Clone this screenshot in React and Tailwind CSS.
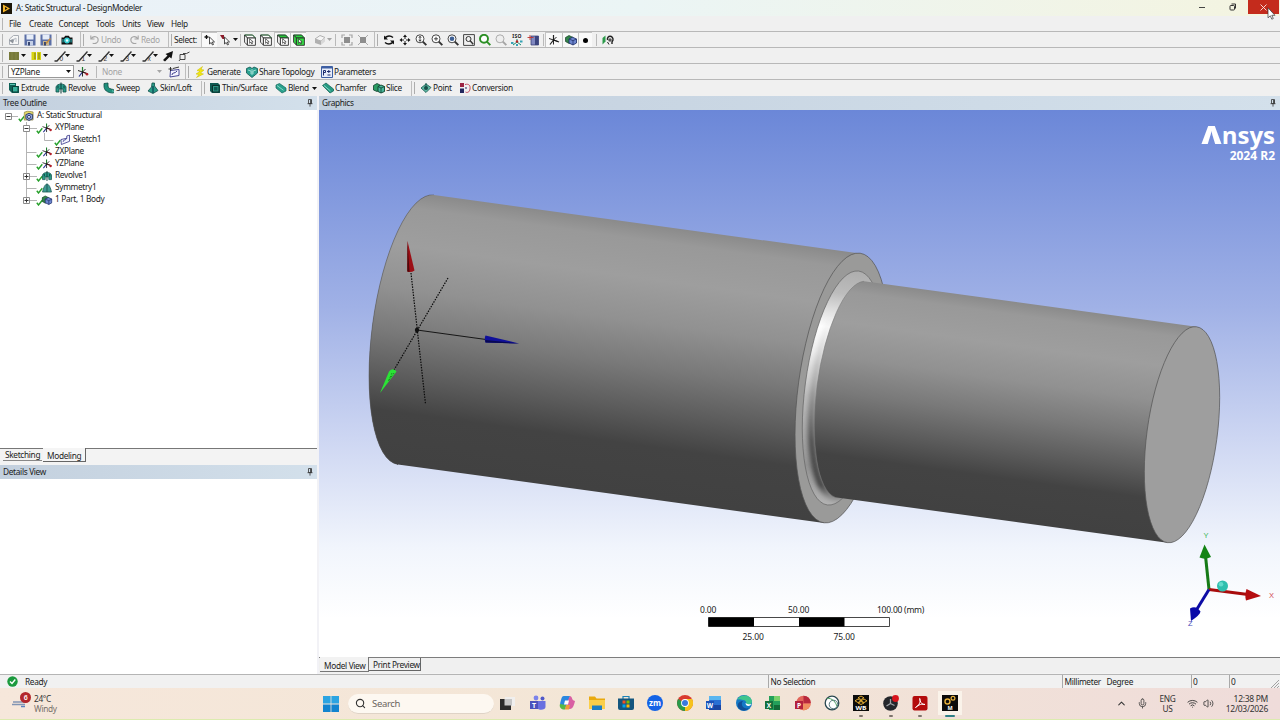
import React from 'react';
import { ChevronUp, Mic, Search, Volume2, Wifi } from 'lucide-react';

// ---------- small building blocks ----------

const Svg = ({ children, size = 'w-3 h-3' }) => (
  <svg className={`${size} shrink-0`} viewBox="0 0 12 12" fill="none">{children}</svg>
);

const Cell = ({ w = 'w-4', on, children }) => (
  <span className={`${w} h-[15px] flex items-center justify-center shrink-0 ${on ? 'bg-[#f9f9f9] border-l border-t border-[#c4c4c4]' : ''}`}>
    {children}
  </span>
);

const Label = ({ w, dim, children }) => (
  <span className={`${w} shrink-0 whitespace-nowrap ${dim ? 'text-[#a3a3a3]' : ''}`}>{children}</span>
);

const Sep = ({ w = 'w-1' }) => (
  <span className={`${w} h-3 shrink-0 flex justify-center`}><i className="w-px h-full bg-[#b9b9b9]" /></span>
);

// end of one toolbar and grip of the next one
const Grip = ({ w = 'w-[10px]' }) => (
  <span className={`${w} h-[15px] shrink-0 flex justify-center items-center gap-[2px]`}>
    <i className="w-px h-full bg-[#bdbdbd]" />
    <i className="w-px h-3 bg-[#adadad]" />
  </span>
);

const Caret = ({ w = 'w-[6px]', color = '#111' }) => (
  <span className={`${w} shrink-0 flex justify-center`}>
    <svg className="w-[5px] h-[3px] shrink-0" viewBox="0 0 5 3"><path d="M0 0h5L2.500 3z" fill={color} /></svg>
  </span>
);

const ToolRow = ({ children, last }) => (
  <div className={`h-4 flex items-center pl-[2px] bg-[#f0f0f0] ${last ? '' : 'border-b border-[#b8b8b8]'}`}>
    <i className="w-px h-3 bg-[#b5b5b5] mr-[3px] shrink-0" />
    {children}
  </div>
);

const Pin = () => (
  <svg className="w-[6px] h-[8px]" viewBox="0 0 6 8">
    <path d="M1.500 .5h3v4h-3zM.5 4.700h5M3 5v2.600" stroke="#333" strokeWidth=".8" fill="none" />
    <path d="M3.200 1h1.200v3.500H3.200z" fill="#333" />
  </svg>
);

const PanelHeader = ({ title }) => (
  <div className="h-[14px] shrink-0 flex items-center justify-between pl-[3px] pr-1 bg-linear-to-r from-[#c3d0de] to-[#d3e0eb]">
    <span>{title}</span>
    <Pin />
  </div>
);

// ---------- toolbar icons ----------

const NewIcon = () => (
  <Svg>
    <path d="M1.500 10.500V5l4-3.500h5v9z" fill="#f7f7f7" stroke="#a8adb4" />
    <path d="M1 6.500l4 3 1.500-5z" fill="#8d939b" /><path d="M5 6l3-2v4" stroke="#b9bec6" />
  </Svg>
);

const SaveIcon = ({ as }) => (
  <Svg>
    <path d="M.5 .5h11v11H.5z" fill="#5b6fa6" />
    <path d="M2.500 .5h7v5h-7z" fill="#e6edf8" /><path d="M3 7h6v4.500H3z" fill={as ? '#c9b78e' : '#c4cfe6'} />
    <path d="M4 8h2v3.500H4z" fill="#39476f" />
    {as && <path d="M6 9.500l4.500-5" stroke="#c58b3d" strokeWidth="1.300" />}
  </Svg>
);

const CameraIcon = () => (
  <Svg>
    <path d="M.5 3.500H3L4.200 1.800h3.600L9 3.500h2.500v7H.5z" fill="#111" />
    <circle cx="6" cy="6.500" r="2.900" fill="#39cfd4" /><circle cx="6" cy="6.500" r="1.200" fill="#e9ffff" />
    <path d="M1.300 5h1.300v3.500H1.300zM9.400 5h1.300v3.500H9.400z" fill="#23999d" />
  </Svg>
);

const UndoIcon = ({ flip }) => (
  <svg className={`w-[11px] h-[11px] ${flip ? '-scale-x-100' : ''}`} viewBox="0 0 12 12" fill="none">
    <path d="M2 1.500v4h4M2.300 5.200C5 1.500 10 2.500 10 6.500c0 3-3 4.500-6 3.500" stroke="#a4a4a4" strokeWidth="1.200" />
  </svg>
);

const CursorIcon = ({ mark }) => (
  <Svg>
    <path d="M5.500 3v7l1.700-1.500L8.500 11l1-.5-1.200-2.400 2.200-.2z" fill="#fff" stroke="#222" strokeWidth=".8" />
    {mark ? <path d="M1 1h4v4H3.500z" fill="#8c1c2b" /> : <path d="M.5 3h4M2.500 1v4" stroke="#111" strokeWidth="1.300" />}
  </Svg>
);

const CubeIcon = ({ top = '#fff', side = '#fff', line = '#2c2c2c' }) => (
  <Svg>
    <path d="M.6 1h8l2.800 3H3.400z" fill={top} stroke={line} strokeWidth=".9" />
    <path d="M.6 1v7.200L3.400 11V4z" fill={side} stroke={line} strokeWidth=".9" />
    <path d="M3.400 4h8v7.300h-8z" fill={side} stroke={line} strokeWidth=".9" />
    <path d="M5.600 4.800v4.500l1.200-1 1 1.700.7-.4-.8-1.700 1.500-.1z" fill="#fff" stroke="#111" strokeWidth=".6" />
    <path d="M.6 1h8l2.800 3" stroke="#26803a" strokeWidth=".7" />
  </Svg>
);

const GhostCube = () => (
  <Svg>
    <path d="M1 5l5-3.500 5 2-4 3.500z" fill="#f5f5f5" stroke="#b0b0b0" /><path d="M1 5l6 2v4L1 9z" fill="#b0b0b0" />
    <path d="M7 7l4-3.500v4L7 11z" fill="#d8d8d8" />
  </Svg>
);

const ExtendIcon = ({ cross }) => (
  <Svg>
    <path d="M3 3h6v6H3z" fill="#8d8d8d" />
    {cross
      ? <path d="M1 1l2 2M11 1L9 3M1 11l2-2M11 11L9 9" stroke="#aaa" />
      : <path d="M1 4V1h3M8 1h3v3M11 8v3H8M4 11H1V8" stroke="#a5a5a5" strokeWidth="1.200" />}
  </Svg>
);

const RotateIcon = () => (
  <Svg>
    <path d="M2 5c0-3 5-4 8-1.500M10 7c0 3-5 4-8 1.500" stroke="#111" strokeWidth="1.500" />
    <path d="M1 1.500v4h4zM11 10.500v-4H7z" fill="#111" />
  </Svg>
);

const PanIcon = () => (
  <Svg>
    <path d="M6 2v8M2 6h8" stroke="#222" strokeDasharray="3 2" />
    <path d="M6 .5L8 3H4zM6 11.500L4 9h4zM.5 6L3 4v4zM11.500 6L9 8V4z" fill="#111" />
  </Svg>
);

const LensIcon = ({ ring = '#333', fill = '#fff', inner, heavy }) => (
  <Svg>
    <circle cx="5" cy="4.800" r="4" fill={fill} stroke={ring} strokeWidth={heavy ? 1.9 : 0.9} />
    <path d="M7.800 7.600l3.500 3.600" stroke={ring} strokeWidth="1.900" />
    {inner}
  </Svg>
);

const IsoIcon = () => (
  <span className="flex flex-col items-center leading-none">
    <span className="text-[5px] font-bold leading-[5px] tracking-[.3px]">ISO</span>
    <svg className="w-3 h-[7px]" viewBox="0 0 12 7">
      <path d="M6 0v3l-4 3M6 3l4 3" stroke="#1a8b6b" fill="none" />
      <path d="M0 3h2.500v2H0zM9 1.500h2.500v2H9zM5 5h2v2H5z" fill="#37a3b5" /><circle cx="6" cy="2.500" r="1.200" fill="#b22" />
    </svg>
  </span>
);

const LookAtIcon = () => (
  <Svg>
    <path d="M4 2h7.500v9H4z" fill="#8088c0" stroke="#30386f" strokeWidth=".7" />
    <path d="M8 2h3.500v9H8z" fill="#3b447f" /><path d="M.5 3.500h6M3 1v5" stroke="#c0322c" strokeWidth=".9" />
  </Svg>
);

const AxesIcon = ({ mono }) => (
  <Svg>
    <path d="M5.500 6V1" stroke={mono ? '#222' : '#1d7c2c'} strokeWidth="1.200" />
    <path d="M5.500 6L11 8" stroke={mono ? '#222' : '#b3202a'} strokeWidth="1.300" />
    <path d="M5.500 6L2 10.500" stroke={mono ? '#222' : '#27318d'} strokeWidth="1.200" />
    <path d="M1 4.500l9 3M5.500 6v4.500M8.500 3L5.500 6" stroke="#111" strokeWidth=".9" />
    {!mono && <circle cx="10" cy="8.300" r="1.300" fill="#b3202a" />}
  </Svg>
);

const PartIcon = () => (
  <Svg>
    <path d="M.5 3.500L4 1.500l4 2v4l-4 2-3.500-2z" fill="#31834a" stroke="#143d22" strokeWidth=".7" />
    <path d="M4 5l3.500-1.800L11.500 5v4L8 11 4 9z" fill="#6d86cf" stroke="#1b2a63" strokeWidth=".8" />
    <path d="M4 5l4 1.700L11.500 5M8 6.700V11" stroke="#1b2a63" strokeWidth=".7" />
  </Svg>
);

const FaceIcon = () => (
  <Svg>
    <path d="M.5 4l3-2.500v6l-3 3z" fill="#2c9a4b" />
    <path d="M5.500 6c-1-5 6-5 5.500 0l-1 2v2" stroke="#222" strokeWidth="1.400" /><circle cx="8" cy="6" r="1.800" fill="#555" />
    <path d="M5.500 8l1.500 2.500" stroke="#222" />
  </Svg>
);

const ColorSwatch = ({ yellow }) => (
  <Svg>
    <path d={yellow ? 'M1.500 2H6v8H1.500zM7 2h4v8H7z' : 'M1 2h10v8H1z'} fill={yellow ? '#d7d413' : '#77793a'} />
    <path d={yellow ? 'M4.500 3h1v6h-1zM8.500 3h1v6h-1z' : 'M4 2v8M8 2v8'} stroke={yellow ? '#8a8712' : '#8f9150'} strokeWidth=".6" />
  </Svg>
);

const PenIcon = ({ n }) => (
  <Svg>
    <path d="M.5 11h2.500L11.500 1.500" stroke="#333" strokeWidth="1.400" />
    <text x="5.500" y="10.500" fontSize="6.500" fill="#333" fontFamily="Liberation Sans, sans-serif">{n}</text>
  </Svg>
);

// teal solids shared by the modelling commands
const solids = {
  extrude: <><path d="M1 1h7v3h3v7H4L1 8z" fill="#0f6157" /><path d="M4.500 4.500H10V10H4.500z" fill="#39b09a" stroke="#0a3f39" /><path d="M2 2h5v1H2z" fill="#5cc4b1" /></>,
  revolve: <><path d="M1 10V5c1-4 9-4 10 0v5H8V7H4v3z" fill="#2a9c89" stroke="#0f514a" strokeWidth=".8" /><path d="M6 .5v11M3 3.500v3M9 3.500v3" stroke="#0b3f3a" /></>,
  sweep: <><path d="M1 1.500l4-.5v3c0 2 2 3 5.500 3.500V11C4 11 1 8 1 4z" fill="#1f8f7c" stroke="#0d4b43" strokeWidth=".8" /><path d="M9 7.500l2 1.500-1 2" fill="#62c9b5" /></>,
  loft: <><path d="M5 1h2.500v3L11 8.500 6 11.500 1 9l3.500-4z" fill="#2a9c89" stroke="#0f514a" strokeWidth=".8" /><path d="M6 4v7" stroke="#0b4a55" strokeWidth="1.300" /></>,
  thin: <><path d="M1 1h8l2 2v8H3L1 9z" fill="#0e5750" /><path d="M3.500 3.500h6.500V10H3.500z" fill="#2c9382" stroke="#082f2b" /><path d="M5 5h3.500v3.500H5z" fill="#0e5750" /></>,
  blend: <><path d="M1 3l3.500-1.500L11 6v3l-4 2-6-5z" fill="#2aa18d" stroke="#13665a" strokeWidth=".7" /><path d="M2 3.500l6.500 4.800" stroke="#87dac9" /></>,
  chamfer: <><path d="M.5 3.500L4 1l7.500 6v2L8 11z" fill="#259a83" stroke="#0f5c4e" strokeWidth=".7" /><path d="M2 3.500l6.500 5.500" stroke="#84d6c3" /></>,
  slice: <><path d="M.5 3.500L4 1.500l3 1.500v5L4 9.500.5 8z" fill="#2a9c62" stroke="#0c3f2b" strokeWidth=".8" /><path d="M5 4.500L8 3l3.500 1.500v5L8 11 5 9.500z" fill="#48b79b" stroke="#0c3f2b" strokeWidth=".9" /><path d="M5 4.500L8 6l3.500-1.500M8 6v5" stroke="#0c3f2b" strokeWidth=".8" /></>,
  share: <><path d="M.5 2.500L4 1l2 1.500L8 1l3.500 1.500V7L6 11.500.5 7z" fill="#2ba292" stroke="#0f5650" strokeWidth=".8" /><path d="M2 4l3 1v3M10 4L7 5v3M6 3v6" stroke="#c9f2ea" strokeWidth=".7" /></>,
  point: <><path d="M1 6l5-4 5 3.500L6 10.500z" fill="#5fb8a4" stroke="#12564b" strokeWidth=".8" /><circle cx="6" cy="6" r="2" fill="#174f47" /><path d="M6 1v4" stroke="#12564b" /></>,
  conversion: <><path d="M1 1h4v4H1z" fill="#9b2443" /><path d="M1 6.500h4v4.500H1z" fill="#23275e" /><path d="M6 2.500c4-1 5.500 1 5 4.500S8 11 6.500 10" stroke="#c54a5c" /><path d="M6 6h2" stroke="#23275e" /></>,
  params: <><path d="M.5 .5h11v11H.5z" fill="#e7edfa" stroke="#3e5fa3" strokeWidth="1" /><path d="M1 1h10v1.500H1z" fill="#3e5fa3" /><path d="M2.500 9.500V4.500h2v2h-2M6 5.500h3.500M7.800 4v3M6.500 9h3" stroke="#1d2c6d" strokeWidth="1" /></>,
  bolt: <><path d="M8.500 .5L3 4.500l3 .8L2 8l3 .5L2.500 11.500 9.500 8l-3-1L10 4 7 3.500z" fill="#f2e90f" stroke="#c9b900" strokeWidth=".5" /></>,
  sketch: <><path d="M1.500 5.500L8 4V1.500l3-1v7L2 11z" fill="#f4f4ff" stroke="#36368b" strokeWidth=".9" /><path d="M4 8c0-3 3-1 4-4" stroke="#36368b" /></>,
  newSketch: <><path d="M2.500 4.500L11 3.500v6L2 11z" fill="#f4f4ff" stroke="#36368b" strokeWidth=".9" /><path d="M4 9c0-3 3-1 5-4" stroke="#36368b" /><path d="M.5 3h4M2.500 1v4M5 2.500l6-1.500" stroke="#222" strokeWidth=".9" /></>,
};

const Solid = ({ name }) => <Svg>{solids[name]}</Svg>;

const Tool = ({ icon, w, children }) => (
  <span className="flex items-center shrink-0">
    <Cell w="w-[15px]"><Solid name={icon} /></Cell>
    <Label w={w}>{children}</Label>
  </span>
);

// ---------- title, menu and toolbars ----------

const TitleBar = () => (
  <div className="h-4 flex items-center justify-between bg-linear-to-r from-[#eaf1f8] via-[#ebf5f5] to-[#f4f4e0]">
    <div className="flex items-center pl-px">
      <svg className="w-[11px] h-[11px]" viewBox="0 0 11 11">
        <path d="M0 0h11v11H0z" fill="#1b1508" />
        <path d="M2 1.500l7 4-7 4z" fill="#f5b62a" /><path d="M4 4l2.500 1.500L4 7z" fill="#1b1508" />
      </svg>
      <span className="ml-[4px]">A: Static Structural - DesignModeler</span>
    </div>
    <div className="flex items-start h-full pr-[1px]">
      <span className="w-[30px] h-[14px] flex items-center justify-center"><i className="w-[6px] h-px bg-[#444]" /></span>
      <span className="w-[31px] h-[14px] flex items-center justify-center">
        <svg className="w-2 h-2" viewBox="0 0 8 8" fill="none" stroke="#333">
          <rect x="1" y="2.500" width="4.500" height="4.500" rx=".8" /><path d="M2.500 1h4v4.500" />
        </svg>
      </span>
      <span className="w-[31px] h-[14px] bg-[#c42b1c] flex items-center justify-center">
        <svg className="w-[7px] h-[7px]" viewBox="0 0 7 7"><path d="M.5 .5l6 6M6.500 .5l-6 6" stroke="#fbe9e7" strokeWidth=".9" /></svg>
      </span>
    </div>
  </div>
);

const MenuBar = () => (
  <div className="h-4 flex items-center bg-[#f0f0f0] border-b border-[#b8b8b8] pl-[2px]">
    <i className="w-px h-3 bg-[#b5b5b5] mr-[6px]" />
    <Label w="w-[20px]">File</Label>
    <Label w="w-[29.500px]">Create</Label>
    <Label w="w-[37.500px]">Concept</Label>
    <Label w="w-[26px]">Tools</Label>
    <Label w="w-[25px]">Units</Label>
    <Label w="w-[24px]">View</Label>
    <Label w="w-[20px]">Help</Label>
  </div>
);

const Toolbars = () => (
  <>
    <ToolRow>
      <Cell><NewIcon /></Cell>
      <Cell><SaveIcon /></Cell>
      <Cell><SaveIcon as /></Cell>
      <Sep w="w-[5px]" />
      <Cell><CameraIcon /></Cell>
      <Grip w="w-[13px]" />
      <Cell w="w-[13px]"><UndoIcon /></Cell>
      <Label w="w-[26px]" dim>Undo</Label>
      <Cell w="w-[14px]"><UndoIcon flip /></Cell>
      <Label w="w-[25px]" dim>Redo</Label>
      <Grip w="w-[8px]" />
      <Label w="w-[27px]">Select:</Label>
      <Cell on><CursorIcon /></Cell>
      <Cell w="w-[15px]"><CursorIcon mark /></Cell>
      <Caret w="w-[6px]" />
      <Sep w="w-[4px]" />
      <Cell><CubeIcon /></Cell>
      <Cell><CubeIcon /></Cell>
      <Cell on><CubeIcon top="#26c63a" /></Cell>
      <Cell on><CubeIcon top="#26d63a" side="#34dd45" /></Cell>
      <span className="w-[8px] shrink-0" />
      <Cell w="w-[12px]"><GhostCube /></Cell>
      <Caret w="w-[6px]" color="#a5a5a5" />
      <Sep w="w-[7px]" />
      <Cell><ExtendIcon /></Cell>
      <Cell><ExtendIcon cross /></Cell>
      <Grip w="w-[10px]" />
      <Cell><RotateIcon /></Cell>
      <Cell><PanIcon /></Cell>
      <Cell><LensIcon inner={<path d="M5 2.300v5M3.800 3.800L5 2.300l1.200 1.500M3.800 5.800L5 7.300l1.200-1.500" stroke="#222" strokeWidth=".8" />} /></Cell>
      <Cell><LensIcon inner={<path d="M3 4.800h4M5 2.800v4" stroke="#222" strokeWidth=".8" />} /></Cell>
      <Cell><LensIcon inner={<circle cx="5" cy="4.800" r="2.300" fill="#3d5f95" />} /></Cell>
      <Cell>
        <Svg>
          <path d="M.6 .6h10.800v10.800H.6z" stroke="#444" /><circle cx="5.500" cy="5" r="2.500" stroke="#333" /><path d="M7 6.500L10.200 10.200" stroke="#333" strokeWidth="1.400" />
        </Svg>
      </Cell>
      <Cell><LensIcon ring="#2b8f24" heavy /></Cell>
      <Cell><LensIcon ring="#a5a5a5" fill="#eee" /></Cell>
      <Cell><IsoIcon /></Cell>
      <Cell><LookAtIcon /></Cell>
      <Sep w="w-[4px]" />
      <Cell on w="w-[17px]"><AxesIcon mono /></Cell>
      <Cell on><PartIcon /></Cell>
      <Cell on w="w-[14px]"><i className="w-[5px] h-[5px] rounded-full bg-black -ml-px" /></Cell>
      <Sep w="w-[8px]" />
      <Cell><FaceIcon /></Cell>
    </ToolRow>
    <ToolRow>
      <Cell><ColorSwatch /></Cell>
      <Caret w="w-[3px]" />
      <span className="w-[3px] shrink-0" />
      <Cell><ColorSwatch yellow /></Cell>
      <Caret w="w-[3px]" />
      <span className="w-[6px] shrink-0" />
      {['0', '1', '2', '3', 'x'].map((n) => (
        <span key={n} className="w-[22px] flex items-center shrink-0">
          <Cell w="w-[13px]"><PenIcon n={n} /></Cell>
          <Caret w="w-[3px]" />
        </span>
      ))}
      <span className="-ml-[3px] flex">
        <Cell><Svg><path d="M11 1L9.500 8.500 7.500 7 3 11.500 1 10l4.500-4.500L3.500 4z" fill="#111" /></Svg></Cell>
        <Cell><Svg><path d="M2 4.500h5v5H2zM5 3.500h3.500L11.500 2M2 9.500L1 11" stroke="#333" strokeWidth=".9" /></Svg></Cell>
      </span>
    </ToolRow>
    <ToolRow>
      <div className="ml-[2px] w-[66px] h-[13px] bg-white border border-[#999] flex items-center justify-between pl-[2px] shrink-0">
        <span>YZPlane</span><Caret w="w-[9px]" />
      </div>
      <Cell w="w-[18px]"><AxesIcon /></Cell>
      <Sep w="w-[8px]" />
      <div className="w-[66px] h-[13px] flex items-center justify-between pl-[2px] shrink-0 text-[#a3a3a3]">
        <span>None</span><Caret w="w-[14px]" color="#a5a5a5" />
      </div>
      <Cell w="w-[15px]"><Solid name="newSketch" /></Cell>
      <Grip w="w-[11px]" />
      <Tool icon="bolt" w="w-[37px]">Generate</Tool>
      <Tool icon="share" w="w-[60px]">Share Topology</Tool>
      <Tool icon="params" w="w-[50px]">Parameters</Tool>
    </ToolRow>
    <ToolRow last>
      <Tool icon="extrude" w="w-[32px]">Extrude</Tool>
      <Tool icon="revolve" w="w-[33px]">Revolve</Tool>
      <Tool icon="sweep" w="w-[29px]">Sweep</Tool>
      <Tool icon="loft" w="w-[38px]">Skin/Loft</Tool>
      <Grip w="w-[9px]" />
      <Tool icon="thin" w="w-[51px]">Thin/Surface</Tool>
      <Tool icon="blend" w="w-[23px]">Blend</Tool>
      <Caret w="w-[6px]" />
      <span className="w-[3px] shrink-0" />
      <Tool icon="chamfer" w="w-[36px]">Chamfer</Tool>
      <Tool icon="slice" w="w-[22px]">Slice</Tool>
      <Grip w="w-[10px]" />
      <Tool icon="point" w="w-[24px]">Point</Tool>
      <Tool icon="conversion" w="w-[44px]">Conversion</Tool>
    </ToolRow>
  </>
);

// ---------- tree outline ----------

const Check = () => (
  <svg className="w-[7px] h-[7px] mt-[4px] shrink-0" viewBox="0 0 7 7"><path d="M.8 3.800L2.500 6 6.300 1.300" stroke="#27a02b" strokeWidth="1.400" fill="none" /></svg>
);

const Box = ({ plus }) => (
  <svg className="w-[7px] h-[7px] shrink-0" viewBox="0 0 7 7">
    <path d="M.5 .5h6v6h-6z" fill="#fff" stroke="#8b8b8b" /><path d={plus ? 'M1.500 3.500h4M3.500 1.500v4' : 'M1.500 3.500h4'} stroke="#333" />
  </svg>
);

const treeRows = [
  { label: 'A: Static Structural', pad: 'pl-[5px]', box: 'minus', icon: <Svg><path d="M.5 2l4-1.500 6 1v9h-10z" fill="#e5d96a" stroke="#77723a" strokeWidth=".7" /><path d="M2.500 4.500L6 3l4 1.500v4.500L6 11 2.500 9z" fill="#8fa3d8" stroke="#1e2b62" strokeWidth=".9" /><circle cx="6" cy="7" r="1.700" stroke="#1e2b62" fill="#e8eefc" /></Svg> },
  { label: 'XYPlane', pad: 'pl-[23px]', box: 'minus', icon: <AxesIcon /> },
  { label: 'Sketch1', pad: 'pl-[44px]', icon: <Solid name="sketch" /> },
  { label: 'ZXPlane', pad: 'pl-[26px]', icon: <AxesIcon /> },
  { label: 'YZPlane', pad: 'pl-[26px]', icon: <AxesIcon /> },
  { label: 'Revolve1', pad: 'pl-[23px]', box: 'plus', icon: <Solid name="revolve" /> },
  { label: 'Symmetry1', pad: 'pl-[26px]', icon: <Svg><path d="M1 10.500C2 6 3.500 2 6 1.500c2.500.5 4 4.500 5 9z" fill="#3f9b93" stroke="#19544f" strokeWidth=".8" /><path d="M6 1.500v9" stroke="#19544f" /></Svg> },
  { label: '1 Part, 1 Body', pad: 'pl-[23px]', box: 'plus', icon: <PartIcon /> },
];

const TreeOutline = () => (
  <div className="relative flex-1 bg-white">
    {/* connector lines run behind the rows */}
    <svg className="absolute left-0 top-0 w-[70px] h-[100px]" viewBox="0 0 70 100" fill="none" stroke="#b4b4b4">
      <path d="M12 6.500h6M26.500 12v78M30 18.500h7M44.500 23v7.500h9M26.500 42.500h10M26.500 54.500h10M30 66.500h7M26.500 78.500h10M30 90.500h7" />
    </svg>
    <div className="relative flex flex-col">
      {treeRows.map((row) => (
        <div key={row.label} className={`${row.pad} h-3 flex items-center`}>
          {row.box && <Box plus={row.box === 'plus'} />}
          <span className={`${row.box ? 'w-[6px]' : 'w-[10px]'} shrink-0`} />
          <Check />
          <span className="-ml-[2px] w-[14px] flex -mt-px"><span className="scale-90 flex">{row.icon}</span></span>
          <span className="-mt-[2px] whitespace-nowrap">{row.label}</span>
        </div>
      ))}
    </div>
  </div>
);

const LeftPanel = () => (
  <div className="w-[317px] shrink-0 flex flex-col">
    <PanelHeader title="Tree Outline" />
    <TreeOutline />
    <div className="h-[17px] flex items-start border-t border-[#777] shrink-0">
      <span className="ml-[3px] w-[39px] h-[12px] pl-[2px] leading-[12px] border-b border-[#888]">Sketching</span>
      <span className="ml-[1px] -mt-px w-[43px] h-[14px] pl-[4px] leading-[15px] bg-[#f5f5f5] border-b border-r border-[#666]">Modeling</span>
    </div>
    <PanelHeader title="Details View" />
    <div className="h-[195px] bg-white shrink-0" />
  </div>
);

// ---------- 3D view ----------

const Viewport = () => (
  <svg className="block w-[961px] h-[547px]" viewBox="319 110 961 547">
    <defs>
      <linearGradient id="sky" gradientUnits="userSpaceOnUse" x1="0" y1="110" x2="0" y2="657">
        <stop offset="0" stopColor="#6b87d8" />
        <stop offset=".36" stopColor="#a0b1e6" />
        <stop offset=".6" stopColor="#cdd6f2" />
        <stop offset=".8" stopColor="#f1f5fc" />
        <stop offset=".93" stopColor="#ffffff" />
      </linearGradient>
      <linearGradient id="shade" gradientUnits="userSpaceOnUse" x1="434" y1="194.600" x2="397" y2="464.200">
        <stop offset="0" stopColor="#8a8a8a" />
        <stop offset=".06" stopColor="#999999" />
        <stop offset=".2" stopColor="#9e9e9e" />
        <stop offset=".36" stopColor="#919191" />
        <stop offset=".52" stopColor="#797979" />
        <stop offset=".68" stopColor="#5c5c5c" />
        <stop offset=".81" stopColor="#434343" />
        <stop offset="1" stopColor="#414141" />
      </linearGradient>
      <linearGradient id="shadeSmall" href="#shade" x1="864" y1="280.800" x2="834.400" y2="497" />
      <linearGradient id="fillet" gradientUnits="userSpaceOnUse" x1="0" y1="271" x2="0" y2="505">
        <stop offset="0" stopColor="#aeaeae" />
        <stop offset=".1" stopColor="#bcbcbc" />
        <stop offset=".25" stopColor="#ffffff" />
        <stop offset=".36" stopColor="#f0f0f0" />
        <stop offset=".55" stopColor="#bcbcbc" />
        <stop offset=".85" stopColor="#949494" />
        <stop offset="1" stopColor="#b2b2b2" />
      </linearGradient>
      <linearGradient id="filletInner" gradientUnits="userSpaceOnUse" x1="0" y1="271" x2="0" y2="505">
        <stop offset=".2" stopColor="#777" stopOpacity="0" />
        <stop offset=".5" stopColor="#777" stopOpacity=".4" />
        <stop offset=".75" stopColor="#444" stopOpacity=".9" />
        <stop offset=".93" stopColor="#444" />
        <stop offset=".98" stopColor="#999" />
      </linearGradient>
      <filter id="soft"><feGaussianBlur stdDeviation="2" /></filter>
      <clipPath id="ring"><ellipse cx="843" cy="388" rx="37.900" ry="118" transform="rotate(7.640 843 388)" /></clipPath>
    </defs>

    <rect x="319" y="110" width="961" height="547" fill="url(#sky)" />

    {/* large shaft section */}
    <path d="M434 195L860 253.600L824 523L398 464.400A43.550 135.400 7.640 0 1 434 195Z" fill="url(#shade)" />
    <path d="M398 464.400A43.550 135.400 7.640 0 1 434 195" fill="url(#shade)" stroke="#555" strokeWidth=".6" />
    <path d="M398 464.400C386 462 370.300 434 370.300 373C370.300 290 402 197 434 195Z" fill="url(#shade)" />
    <ellipse cx="842" cy="388" rx="43.750" ry="136" transform="rotate(7.640 842 388)" fill="#9a9a99" stroke="#555" strokeWidth=".7" />

    {/* fillet */}
    <ellipse cx="843" cy="388" rx="37.900" ry="118" transform="rotate(7.640 843 388)" fill="url(#fillet)" />
    <g clipPath="url(#ring)">
      <ellipse cx="849.500" cy="389" rx="35.600" ry="109.800" transform="rotate(7.640 849.500 389)" fill="none" stroke="url(#filletInner)" strokeWidth="7" filter="url(#soft)" />
    </g>
    <ellipse cx="843" cy="388" rx="37.900" ry="118" transform="rotate(7.640 843 388)" fill="none" stroke="#666" strokeWidth=".7" />

    {/* small shaft section */}
    <path d="M864 281.300L1196.500 326.800L1167.500 542.700L835 497.200A35.100 109.200 7.640 0 1 864 281.300Z" fill="url(#shadeSmall)" />
    <path d="M835 497.200A35.100 109.200 7.640 0 1 864 281.300" fill="none" stroke="#777" strokeWidth=".6" />
    <ellipse cx="1182" cy="434.700" rx="35.100" ry="108.900" transform="rotate(7.640 1182 434.700)" fill="#9e9e9e" stroke="#555" strokeWidth=".7" />

    {/* plane axes */}
    <g stroke="#0a0a0a" strokeWidth="1.200" fill="none">
      <path d="M411 273L425.500 404M448 278L394 370" strokeDasharray="1.500 1.200" />
      <path d="M417 330L486 339.500" strokeWidth=".9" />
    </g>
    <circle cx="417" cy="330" r="2.200" fill="#111" />
    <path d="M407.500 241L414.500 270.500Q411 273 407.300 271.500Z" fill="#9c0f16" />
    <path d="M407.500 241L409.500 272L407.300 271.500Z" fill="#4e0709" />
    <path d="M519 343.500L485.500 335.500Q484 339 485.500 342.500Z" fill="#10109a" />
    <path d="M519 343.500L485.500 342.500L485.300 340Z" fill="#080852" />
    <path d="M380 393L389 371.500Q393 367 396.500 371.500Z" fill="#2be336" />
    <path d="M388.500 381L392 373M389 380l5-7" stroke="#137d1b" strokeWidth=".8" strokeDasharray="2 1.500" />

    {/* orientation triad */}
    <path d="M1209 589.500L1205.500 556" stroke="#167a16" strokeWidth="3" />
    <path d="M1204.500 544.500L1211 557Q1205 560 1199.500 557.500Z" fill="#138413" />
    <path d="M1209 589.500L1248 594.500" stroke="#a80c0c" strokeWidth="3" />
    <path d="M1261 596L1246.500 589Q1244.500 595 1246 600.500Z" fill="#b50d10" />
    <path d="M1209 589.500L1197 609" stroke="#0c0ca6" strokeWidth="3" />
    <path d="M1191 621L1190 608.500Q1196 605 1200.500 611.500Q1200 615 1191 621Z" fill="#0a0aa8" />
    <circle cx="1222.500" cy="586" r="5.500" fill="#2fbfae" />
    <circle cx="1221" cy="584.200" r="2.300" fill="#62dccd" />
    <g fontFamily="Liberation Sans, sans-serif" fontSize="7.500">
      <text x="1203.500" y="538" fill="#3fb859">Y</text>
      <text x="1269" y="597.500" fill="#d24a55">X</text>
      <text x="1188" y="626" fill="#4a4ab8">Z</text>
    </g>

    {/* scale */}
    <path d="M708.500 617.500h181v9h-181z" fill="#fff" stroke="#333" strokeWidth=".9" />
    <path d="M708.500 617.500h45.500v9h-45.500zM799 617.500h45.500v9H799z" fill="#000" />
    <g fontFamily="Noto Sans, sans-serif" fontSize="8.500" fill="#222">
      <text x="700" y="613" textLength="16">0.00</text>
      <text x="788" y="613" textLength="21">50.00</text>
      <text x="877" y="613" textLength="47">100.00 (mm)</text>
      <text x="742.500" y="640" textLength="21">25.00</text>
      <text x="833.500" y="640" textLength="21">75.00</text>
    </g>
  </svg>
);

const GraphicsPanel = () => (
  <div className="w-[961px] shrink-0 flex flex-col">
    <PanelHeader title="Graphics" />
    <div className="relative">
      <Viewport />
      <div className="absolute right-[5px] top-[9px] text-white text-right font-['Open_Sans',sans-serif] tracking-normal font-bold">
        <div className="text-[24px] leading-[30px]"><span className="inline-block origin-right scale-x-115 font-extrabold text-[25px] leading-[30px]">Λ</span>nsys</div>
        <div className="text-[12px] leading-[13px] -mt-px">2024 R2</div>
      </div>
    </div>
    <div className="h-4 flex items-start bg-[#f0f0f0] border-t border-[#7d7d7d]">
      <span className="ml-[1px] -mt-px w-[49px] h-[15px] pl-[4px] leading-[17px] bg-[#f2f2f2] border-b border-r border-[#777] whitespace-nowrap">Model View</span>
      <span className="w-[52px] h-[13px] pl-[4px] leading-[13px] border-b border-r border-[#666] whitespace-nowrap">Print Preview</span>
    </div>
  </div>
);

// ---------- status bar ----------

const StatusBar = () => (
  <div className="h-[14px] flex items-center bg-[#f1f1f1] border-t border-[#b5b5b5] shrink-0">
    <div className="w-[768px] flex items-center pl-[7px]">
      <svg className="w-[11px] h-[11px]" viewBox="0 0 11 11">
        <circle cx="5.500" cy="5.500" r="5.200" fill="#1b9a3e" /><path d="M3 5.500l2 2 3.300-4" stroke="#fff" strokeWidth="1.400" fill="none" />
      </svg>
      <span className="ml-[7px]">Ready</span>
    </div>
    <div className="w-[294px] h-full flex items-center border-l border-[#a9a9a9] pl-[1.500px]">No Selection</div>
    <div className="w-[129px] h-full flex items-center border-l border-[#a9a9a9] pl-[1.500px]">
      <Label w="w-[42px]">Millimeter</Label><Label w="w-[30px]">Degree</Label>
    </div>
    <div className="w-[38px] h-full flex items-center border-l border-[#a9a9a9] pl-px">0</div>
    <div className="w-[41px] h-full flex items-center border-l border-[#a9a9a9] pl-px">0</div>
    <svg className="w-[10px] h-[9px] self-end" viewBox="0 0 10 9"><path d="M1 9l8-8M4 9l5-5M7 9l2-2" stroke="#999" strokeWidth=".9" /></svg>
  </div>
);

// ---------- taskbar ----------

const AppIcon = ({ children, run, active }) => (
  <span className="w-[29.440px] h-[30px] flex flex-col items-center shrink-0 pt-[7px]">
    <span className={`flex ${active ? 'outline-4 outline-[#faf3ea] bg-[#faf3ea]' : ''}`}>
      <svg className="w-4 h-4" viewBox="0 0 16 16" fill="none">{children}</svg>
    </span>
    {run && <i className="w-[4px] h-[2px] mt-[4px] rounded-full bg-[#7d746c]" />}
    {active && <i className="relative w-[10px] h-[2px] mt-[4px] rounded-full bg-[#2e8086]" />}
  </span>
);

const letter = { fontFamily: 'Open Sans, sans-serif', fontWeight: 700, fill: '#fff', letterSpacing: 0 };

const Taskbar = () => (
  <div className="h-8 flex bg-linear-to-r from-[#f6e7db] via-[#f3e6d6] to-[#efdcda] border-b border-[#dcebaf] text-[#333] shrink-0">
    <div className="w-[322px] flex pl-[12px] pt-[4px]">
      <div className="relative w-[22px]">
        <svg className="w-[16px] h-[8px] mt-[8px]" viewBox="0 0 16 8" fill="none">
          <path d="M1 2h14M0 4.500h13" stroke="#8295b4" strokeWidth="1.300" /><path d="M9 6.500h4" stroke="#5b82bd" strokeWidth="1.500" />
        </svg>
        <span className="absolute left-[8px] top-0 w-[11px] h-[11px] rounded-full bg-[#b3262b] text-white text-[7px] leading-[11px] text-center font-semibold">6</span>
      </div>
      <div className="leading-[10.500px] pt-[1.500px]">
        <div>24°C</div>
        <div className="text-[#77706a]">Windy</div>
      </div>
    </div>
    <div className="w-[26px] pt-2 pl-px">
      <svg className="w-4 h-4" viewBox="0 0 16 16">
        <path d="M0 0h7.600v7.600H0zM8.400 0H16v7.600H8.400z" fill="#2ba4e2" /><path d="M0 8.400h7.600V16H0zM8.400 8.400H16V16H8.400z" fill="#1284cf" />
      </svg>
    </div>
    <div className="w-[145.500px] h-5 mt-[6px] rounded-full bg-[#fdf8f1] border-b border-[#dfd3c6] flex items-center pl-[7px]">
      <Search className="w-[11px] h-[11px]" strokeWidth={2.4} color="#333" />
      <span className="ml-[6px] text-[9.500px] text-[#6b655e]">Search</span>
    </div>
    <div className="flex">
      <AppIcon><path d="M5 2h10v9H5z" fill="#f0efee" /><path d="M0 4h11v11H0z" fill="#2b2b2b" /><path d="M4.500 4h7.500v6.500H4.500z" fill="#c6c6c6" /></AppIcon>
      <AppIcon>
        <circle cx="6" cy="3" r="2.400" fill="#7b83eb" /><circle cx="12.500" cy="3.500" r="2" fill="#5059c9" />
        <path d="M3 6h12.500v6c0 3-6 4-9 1z" fill="#6a70e0" /><path d="M0 6h8v8H0z" fill="#4b53bc" /><text x="2" y="12.500" fontSize="7" {...letter}>T</text>
      </AppIcon>
      <AppIcon>
        <path d="M5 1h6l-3 10-4 3C0 12 1 8 2 5c.6-2 1-4 3-4z" fill="#2a87e0" /><path d="M11 1c3 1 1 4 5 5-1 4-2 8-5 8H6l3-9z" fill="#d95fa3" />
        <path d="M1 9l6 1-1 4.500C2 15 0 12 1 9z" fill="#58b947" /><path d="M7 10l4 0-1 4.500H6z" fill="#f29c38" /><path d="M6 5.500h4l-1 4H5z" fill="#fff" />
      </AppIcon>
      <AppIcon><path d="M0 1.500h6l1.500 2H16V14H0z" fill="#e9a90f" /><path d="M0 5h16v9H0z" fill="#fbcf4a" /><path d="M3 10.500h10V15H3z" fill="#1e7fc4" /></AppIcon>
      <AppIcon>
        <path d="M5 4V1.500h6V4" stroke="#1c83b8" strokeWidth="1.200" /><path d="M0 3.500h16V13q0 2-2 2H2q-2 0-2-2z" fill="#14567f" />
        <path d="M4.500 5.500h3v3h-3z" fill="#f25022" /><path d="M8.500 5.500h3v3h-3z" fill="#7fba00" /><path d="M4.500 9.500h3v3h-3z" fill="#00a4ef" /><path d="M8.500 9.500h3v3h-3z" fill="#ffb900" />
      </AppIcon>
      <AppIcon><circle cx="8" cy="8" r="8" fill="#1463e6" /><text x="2" y="10.500" fontSize="8" textLength="12" lengthAdjust="spacingAndGlyphs" {...letter}>zm</text></AppIcon>
      <AppIcon>
        <circle cx="8" cy="8" r="8" fill="#d93a2e" /><path d="M8 8L1.100 4A8 8 0 0 0 8 16z" fill="#2a9a4a" /><path d="M8 8v8A8 8 0 0 0 15 4H8z" fill="#f6c21c" />
        <circle cx="8" cy="8" r="3.900" fill="#fff" /><circle cx="8" cy="8" r="3" fill="#3a79dd" />
      </AppIcon>
      <AppIcon><path d="M3 1h12v14H3z" fill="#2a6fd4" /><path d="M3 1h12v4H3z" fill="#5bb6f0" /><path d="M3 10h12v5H3z" fill="#1a45a3" /><path d="M0 6h8v8H0z" fill="#1b51b8" /><text x=".8" y="12.500" fontSize="6.500" {...letter}>W</text></AppIcon>
      <AppIcon>
        <circle cx="8" cy="8" r="8" fill="#1579c6" /><path d="M1 5C4-1 14-1 16 6c0 4-4 5-6 4 1-2 0-5-3-5C4 4 2 4 1 5z" fill="#3fc58d" />
        <path d="M7 6c-3 3 0 9 6 7-4 4-9 3-11-1-1-4 2-6 5-6z" fill="#124f97" /><path d="M9.500 8c0 3.500 4.500 4 6 1-2 .5-4 .5-6-1z" fill="#fff" />
      </AppIcon>
      <AppIcon><path d="M4 1h11v14H4z" fill="#23a05a" /><path d="M9 1h6v5H9z" fill="#7ad06a" /><path d="M9 10h6v5H9z" fill="#126b37" /><path d="M0 6h8v8H0z" fill="#156f3b" /><text x="1.800" y="12.500" fontSize="6.500" {...letter}>X</text></AppIcon>
      <AppIcon><circle cx="8.500" cy="8" r="7.300" fill="#e2655a" /><path d="M8.500 .7a7.300 7.300 0 0 1 7.300 7.300H8.500z" fill="#b8283c" /><path d="M8 9h7.500c-.5 4-4 6.500-7.500 6.300z" fill="#f09060" /><path d="M0 6h8v8H0z" fill="#b3213c" /><text x="2" y="12.500" fontSize="6.500" {...letter}>P</text></AppIcon>
      <AppIcon><circle cx="8" cy="8" r="6.800" fill="#fff" stroke="#2b4851" strokeWidth="1.300" /><circle cx="9.500" cy="9.500" r="4.300" stroke="#55757c" strokeWidth="1" /><path d="M3 3.500c5-1 9 4 10 8" stroke="#4b9b5f" /></AppIcon>
      <AppIcon run>
        <path d="M0 0h16v16H0z" fill="#0b0b0b" /><path d="M8 1l3 1.800-3 1.800-3-1.800zM5 4l3 1.800-3 1.800-3-1.800zM11 4l3 1.800-3 1.800-3-1.800zM8 6.500l3 1.500-3 1.500L5 8z" stroke="#d9a431" strokeWidth="1" />
        <text x="2.500" y="14.500" fontSize="5.500" textLength="11" lengthAdjust="spacingAndGlyphs" {...letter}>WB</text>
      </AppIcon>
      <AppIcon run>
        <circle cx="7.500" cy="8.500" r="7.300" fill="#24262b" /><path d="M7.500 8.500V4M7.500 8.500l4 2M7.500 8.500l-4 2.500" stroke="#9fa3a8" strokeWidth="1.300" />
        <circle cx="12.500" cy="3.500" r="3.400" fill="#d8131c" />
      </AppIcon>
      <AppIcon run><rect x=".5" y="1" width="15" height="14.500" rx="2" fill="#b30b0c" /><path d="M3.500 12.500C7 11 8.500 7 8 4c0-1-1-1 0 1.500 1 3 3 4.500 5 4-2-1-7 0-9.500 3z" stroke="#fff" strokeWidth="1" /></AppIcon>
      <AppIcon active>
        <path d="M0 0h16v16H0z" fill="#0b0b0b" /><circle cx="5.500" cy="6.500" r="2.500" stroke="#e8b23c" strokeWidth="1.400" /><circle cx="11" cy="3.300" r="1.900" stroke="#e8b23c" strokeWidth="1.200" />
        <text x="5.500" y="14.500" fontSize="5.500" {...letter}>M</text>
      </AppIcon>
    </div>
    <div className="flex-1 flex items-center justify-end pr-[12px]">
      <ChevronUp className="w-[11px] h-[11px] mr-[10px]" strokeWidth={2.2} />
      <Mic className="w-[11px] h-[11px] mr-[9px]" strokeWidth={1.7} />
      <div className="w-[21px] mr-[9px] text-center leading-[10.500px] pt-px">ENG<br />US</div>
      <Wifi className="w-[11px] h-[11px] mr-[5px]" strokeWidth={2} />
      <Volume2 className="w-[11px] h-[11px] mr-[5px]" strokeWidth={1.8} />
      <div className="w-[49px] text-right leading-[10.500px] pt-px whitespace-nowrap text-[8.500px] tracking-[-0.3px]">12:38 PM<br />12/03/2026</div>
    </div>
  </div>
);

const App = () => (
  <div className="relative w-[1280px] h-[720px] overflow-hidden flex flex-col bg-[#f3f3f3] text-[#1c1c1c] text-[8.300px] leading-[12px] tracking-[-0.33px] font-['Noto_Sans',sans-serif]">
    <TitleBar />
    <MenuBar />
    <Toolbars />
    <div className="h-[578px] flex shrink-0">
      <LeftPanel />
      <div className="w-[2px] bg-[#f2f2f6] shrink-0" />
      <GraphicsPanel />
    </div>
    <StatusBar />
    <Taskbar />
    {/* mouse pointer */}
    <svg className="absolute left-[1267px] top-[7px] w-[9px] h-[13px]" viewBox="0 0 9 13">
      <path d="M1 .8v10l2.300-2 1.500 3.400 1.500-.7-1.500-3.200h3.200z" fill="#fff" stroke="#333" strokeWidth=".7" />
    </svg>
  </div>
);

export default App;
